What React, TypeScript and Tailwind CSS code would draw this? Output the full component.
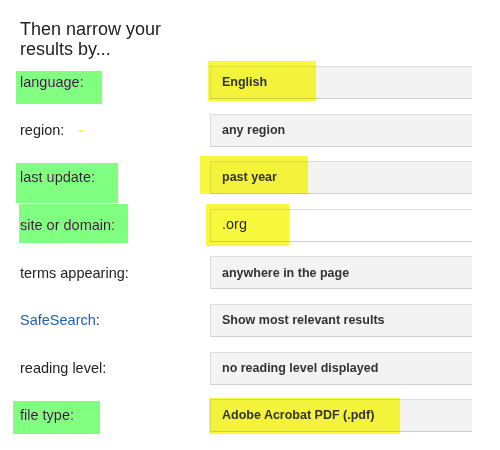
import React from 'react';

type Row = {
  label: React.ReactNode;
  value: string;
  input?: boolean;
};

const rows: Row[] = [
  { label: 'language:', value: 'English' },
  { label: 'region:', value: 'any region' },
  { label: 'last update:', value: 'past year' },
  { label: 'site or domain:', value: '.org', input: true },
  { label: 'terms appearing:', value: 'anywhere in the page' },
  {
    label: (
      <>
        <span className="text-[#1f5fad]">SafeSearch</span>:
      </>
    ),
    value: 'Show most relevant results',
  },
  { label: 'reading level:', value: 'no reading level displayed' },
  { label: 'file type:', value: 'Adobe Acrobat PDF (.pdf)' },
];

// highlighter marks drawn over the screenshot
const marks = [
  { cls: 'left-[16px] top-[71px] w-[86px] h-[33px] bg-[#80ff80]' },
  { cls: 'left-[16px] top-[163px] w-[102px] h-[40px] bg-[#80ff80]' },
  { cls: 'left-[19px] top-[204px] w-[109px] h-[39px] bg-[#80ff80]' },
  { cls: 'left-[13px] top-[401px] w-[87px] h-[33px] bg-[#80ff80]' },
  { cls: 'left-[208px] top-[61px] w-[108px] h-[40px] bg-[#f7f73c]' },
  { cls: 'left-[200px] top-[156px] w-[108px] h-[38px] bg-[#f7f73c]' },
  { cls: 'left-[206px] top-[204px] w-[83px] h-[42px] bg-[#f7f73c]' },
  { cls: 'left-[209px] top-[398px] w-[191px] h-[36px] bg-[#f7f73c]' },
  { cls: 'left-[79px] top-[130px] w-[4px] h-[2px] bg-[#f7f73c]' },
];

export default function App() {
  return (
    <div
      className="relative w-[500px] h-[450px] bg-white overflow-hidden pl-5 pt-[19px] text-[#222]"
      style={{ fontFamily: '"Liberation Sans", Arial, sans-serif' }}
    >
      <h1 className="text-[18px] leading-[20px] font-normal text-[#222]">
        Then narrow your
        <br />
        results by...
      </h1>

      <div className="mt-[7px] flex flex-col gap-[14.6px]">
        {rows.map((r, i) => (
          <div key={i} className="flex items-center">
            <div className="w-[190px] text-[14.5px] leading-none">{r.label}</div>
            <div
              className={
                'h-[33px] w-[262px] flex items-center pl-[11px] border border-r-0 border-[#dcdcdc] border-b-[#cfcfcf] ' +
                (r.input
                  ? 'bg-white text-[14.5px] font-normal text-[#222]'
                  : 'bg-[#f3f3f3] text-[12.5px] font-bold text-[#333]')
              }
            >
              {r.value}
            </div>
          </div>
        ))}
      </div>

      {marks.map((m, i) => (
        <div key={i} className={'absolute mix-blend-darken ' + m.cls} />
      ))}
    </div>
  );
}
